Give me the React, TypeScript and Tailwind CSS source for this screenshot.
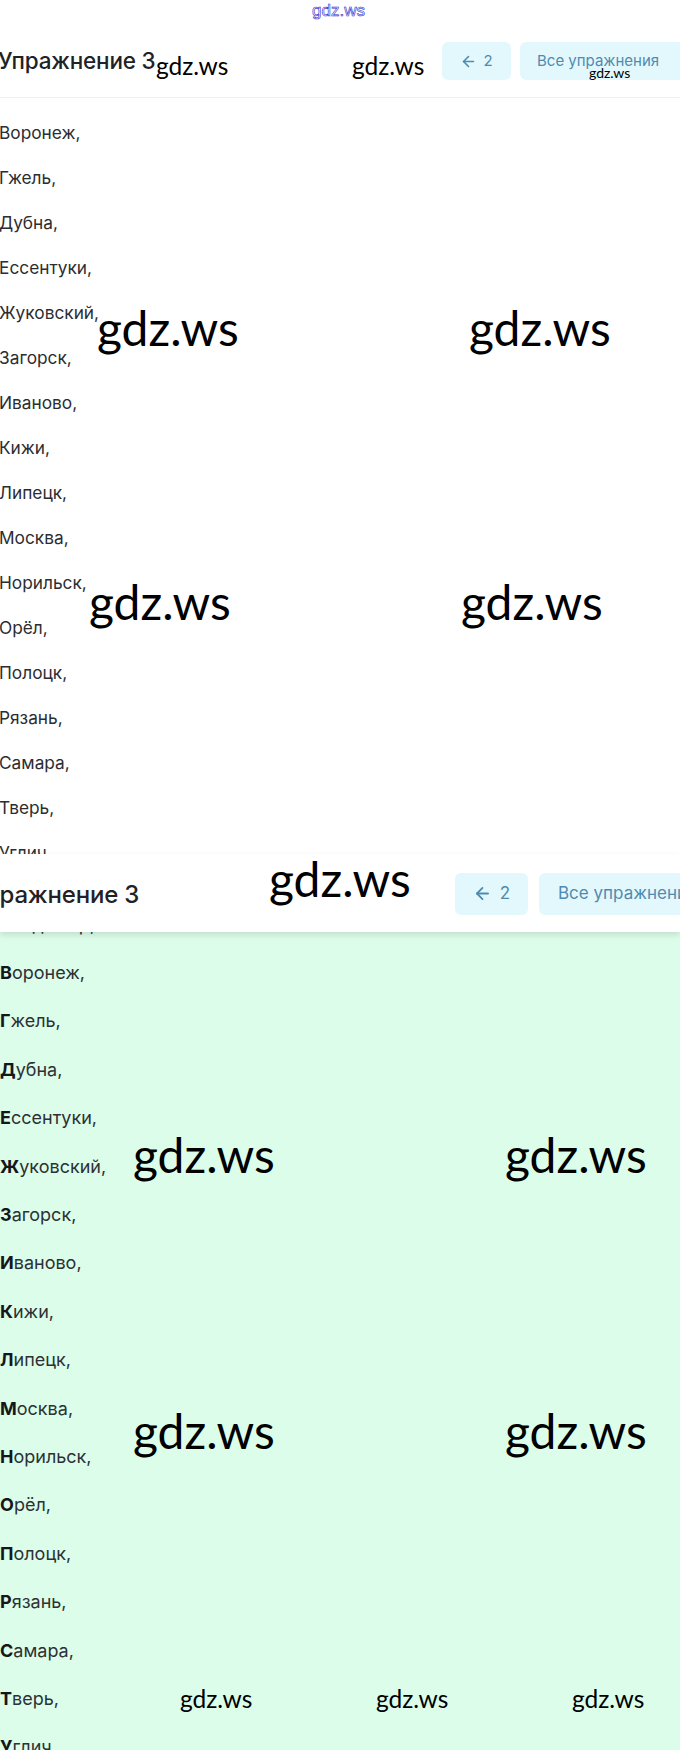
import React from 'react';
import { ArrowLeft } from 'lucide-react';

const cities = [
  'Владимир,',
  'Воронеж,',
  'Гжель,',
  'Дубна,',
  'Ессентуки,',
  'Жуковский,',
  'Загорск,',
  'Иваново,',
  'Кижи,',
  'Липецк,',
  'Москва,',
  'Норильск,',
  'Орёл,',
  'Полоцк,',
  'Рязань,',
  'Самара,',
  'Тверь,',
  'Углич',
];

const marks = [
  { x: 156, y: 54, size: 'text-[24.5px]' },
  { x: 352, y: 54, size: 'text-[24.5px]' },
  { x: 589, y: 66, size: 'text-[14px]' },
  { x: 97, y: 304, size: 'text-[48px]' },
  { x: 469, y: 304, size: 'text-[48px]' },
  { x: 89, y: 578, size: 'text-[48px]' },
  { x: 461, y: 578, size: 'text-[48px]' },
  { x: 269, y: 855, size: 'text-[48px]' },
  { x: 133, y: 1131, size: 'text-[48px]' },
  { x: 505, y: 1131, size: 'text-[48px]' },
  { x: 133, y: 1407, size: 'text-[48px]' },
  { x: 505, y: 1407, size: 'text-[48px]' },
  { x: 180, y: 1687, size: 'text-[24.5px]' },
  { x: 376, y: 1687, size: 'text-[24.5px]' },
  { x: 572, y: 1687, size: 'text-[24.5px]' },
];

export default function App() {
  return (
    <div className="relative w-[680px] h-[1750px] overflow-hidden bg-white font-['Inter',sans-serif] text-[#2b2d31]">
      {/* first capture */}
      <header className="h-[98px] border-b border-[#eeeeee] flex items-end pb-[17px] bg-white relative z-10">
        <h1 className="flex-1 -ml-[2px] text-[22.5px] font-medium tracking-[-0.2px] leading-none pb-[8px] text-[#1f2227]">
          Упражнение 3
        </h1>
        <div className="flex gap-[9px]">
          <button className="w-[69px] h-[38px] rounded-md bg-[#e3f8fc] flex items-center justify-center gap-[6px] text-[#4f8bb0] text-[15px]">
            <ArrowLeft className="w-[17px] h-[17px]" strokeWidth={2.3} />
            2
          </button>
          <button className="w-[160px] h-[38px] rounded-l-md bg-[#e3f8fc] flex items-center pl-[17px] text-[#4f8bb0] text-[15px] whitespace-nowrap">
            Все упражнения
          </button>
        </div>
      </header>
      <div className="h-[756px] overflow-hidden">
        <ul className="-mt-[33px]">
          {cities.map((c) => (
            <li key={c} className="h-[45px] flex items-center text-[17.3px] -ml-[1px]">
              {c}
            </li>
          ))}
        </ul>
      </div>

      {/* second capture */}
      <div className="relative">
        <header className="relative z-10 h-[78px] bg-white flex items-center shadow-[0_3px_6px_rgba(0,0,0,0.12)]">
          <h2 className="flex-1 -ml-[29px] text-[24px] font-medium tracking-[-0.2px] leading-none pt-[4px] text-[#1f2227]">
            Упражнение 3
          </h2>
          <div className="flex gap-[11px] pt-[1px]">
            <button className="w-[73px] h-[42px] rounded-md bg-[#e3f8fc] flex items-center justify-center gap-[8px] text-[#4f8bb0] text-[17px]">
              <ArrowLeft className="w-[19px] h-[19px]" strokeWidth={2.3} />
              2
            </button>
            <button className="w-[141px] h-[42px] rounded-l-md bg-[#e3f8fc] flex items-center pl-[19px] text-[#4f8bb0] text-[17px] whitespace-nowrap overflow-hidden">
              Все упражнения
            </button>
          </div>
        </header>
        <div className="h-[818px] bg-[#dcfde9] overflow-hidden">
          <ul className="-mt-[32px]">
            {cities.map((c) => (
              <li key={c} className="h-[48.4px] flex items-center text-[18px] text-[#2d3136]">
                <span className="font-bold text-[#15171a]">{c[0]}</span>
                {c.slice(1)}
              </li>
            ))}
          </ul>
        </div>
      </div>

      {/* watermarks laid over the captures */}
      <span className="absolute left-[312px] top-[2px] z-20 text-[17px] leading-none font-['Liberation_Sans',sans-serif] text-white [-webkit-text-stroke:0.6px_#2a2ad0]">
        gdz.ws
      </span>
      {marks.map((m, i) => (
        <span
          key={i}
          className={`absolute z-20 leading-none text-black font-['Lato',sans-serif] ${m.size}`}
          style={{ left: m.x, top: m.y }}
        >
          gdz.ws
        </span>
      ))}
    </div>
  );
}
